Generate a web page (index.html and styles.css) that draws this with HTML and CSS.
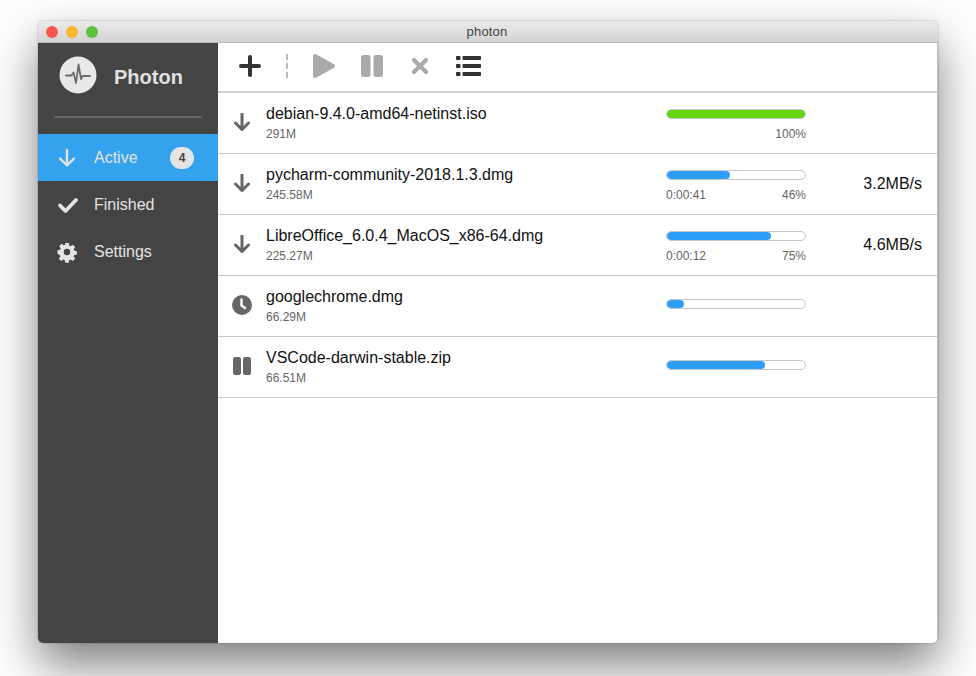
FILE: index.html
```html
<!DOCTYPE html>
<html lang="en">
<head>
    <meta charset="UTF-8">
    <meta name="viewport" content="width=device-width, initial-scale=1.0">
    <title>photon</title>
    <link rel="stylesheet" href="styles.css">
</head>
<body>
    <div class="window">
        <div class="titlebar">
            <div class="lights">
                <span class="light red"></span>
                <span class="light yellow"></span>
                <span class="light green"></span>
            </div>
            <span class="title">photon</span>
        </div>
        <div class="app">
            <aside class="sidebar">
                <div class="brand">
                    <svg class="logo" viewBox="0 0 38 38">
                        <circle cx="19" cy="19" r="18.500" fill="#e8e8e8"/>
                        <path d="M7 19.500h5.500l2-3 2.500 10.500 2.500-18.500 2.500 14.500 1.500-3h7.500" fill="none" stroke="#6b6b6b" stroke-width="1.800" stroke-linejoin="round" stroke-linecap="round"/>
                    </svg>
                    <span class="brand-name">Photon</span>
                </div>
                <div class="divider"></div>
                <nav>
                    <div class="nav-item active">
                        <svg class="nav-icon" viewBox="0 0 18 18"><path d="M9 1v15M2 9.500l7 7 7-7" fill="none" stroke="currentColor" stroke-width="2.400" stroke-linecap="round" stroke-linejoin="round"/></svg>
                        <span class="nav-label">Active</span>
                        <span class="badge">4</span>
                    </div>
                    <div class="nav-item">
                        <svg class="nav-icon wide" viewBox="0 0 20 18"><path d="M2 9.500l5.500 5.500L18 4" fill="none" stroke="currentColor" stroke-width="3.800" stroke-linecap="round" stroke-linejoin="round"/></svg>
                        <span class="nav-label">Finished</span>
                    </div>
                    <div class="nav-item">
                        <svg class="nav-icon" viewBox="0 0 18 18"><path fill-rule="evenodd" fill="currentColor" d="M7.300 0h3.400l.5 2.600 1.400.6 2.200-1.500 2.400 2.400-1.500 2.200.6 1.400 2.600.5v3.400l-2.600.5-.6 1.400 1.500 2.200-2.400 2.400-2.200-1.500-1.400.6-.5 2.600H7.300l-.5-2.600-1.400-.6-2.200 1.500-2.400-2.400 1.500-2.200-.6-1.400L-.5 10.700V7.300l2.600-.5.6-1.400-1.500-2.200 2.400-2.400 2.200 1.500 1.400-.6zM9 5.800a3.200 3.200 0 1 0 0 6.400 3.200 3.200 0 0 0 0-6.400z"/></svg>
                        <span class="nav-label">Settings</span>
                    </div>
                </nav>
            </aside>
            <main class="content">
                <div class="toolbar">
                    <svg class="tool plus" viewBox="0 0 22 22"><path d="M11 2v18M2 11h18" stroke="#333" stroke-width="4" stroke-linecap="round"/></svg>
                    <span class="tool-sep"></span>
                    <svg class="tool play" viewBox="0 0 22 24"><path d="M0 2v20a2 2 0 0 0 3 1.700l18-10a2 2 0 0 0 0-3.400L3 .3A2 2 0 0 0 0 2z" fill="#aaa"/></svg>
                    <svg class="tool pause" viewBox="0 0 22 22"><rect width="9.500" height="22" rx="2.500" fill="#aaa"/><rect x="12.500" width="9.500" height="22" rx="2.500" fill="#aaa"/></svg>
                    <svg class="tool cross" viewBox="0 0 18 18"><path d="M3 3l12 12M15 3L3 15" stroke="#aaa" stroke-width="4.200" stroke-linecap="round"/></svg>
                    <svg class="tool list" viewBox="0 0 25 20"><g fill="#333"><rect y="0" width="4.500" height="4" rx=".8"/><rect y="8" width="4.500" height="4" rx=".8"/><rect y="16" width="4.500" height="4" rx=".8"/><rect x="6.500" y="0" width="18.500" height="4" rx=".8"/><rect x="6.500" y="8" width="18.500" height="4" rx=".8"/><rect x="6.500" y="16" width="18.500" height="4" rx=".8"/></g></svg>
                </div>
                <div class="tasks">
                    <div class="task">
                        <svg class="task-icon" viewBox="0 0 18 18"><path d="M9 1v15M2.500 10l6.500 6.500 6.500-6.500" fill="none" stroke="#666" stroke-width="3" stroke-linecap="round" stroke-linejoin="round"/></svg>
                        <div class="task-info">
                            <div class="task-name">debian-9.4.0-amd64-netinst.iso</div>
                            <div class="task-size">291M</div>
                        </div>
                        <div class="task-progress">
                            <div class="bar"><div class="bar-fill done" style="width: 100%"></div></div>
                            <div class="bar-meta"><span></span><span>100%</span></div>
                        </div>
                        <div class="task-speed"></div>
                    </div>
                    <div class="task">
                        <svg class="task-icon" viewBox="0 0 18 18"><path d="M9 1v15M2.500 10l6.500 6.500 6.500-6.500" fill="none" stroke="#666" stroke-width="3" stroke-linecap="round" stroke-linejoin="round"/></svg>
                        <div class="task-info">
                            <div class="task-name">pycharm-community-2018.1.3.dmg</div>
                            <div class="task-size">245.58M</div>
                        </div>
                        <div class="task-progress">
                            <div class="bar"><div class="bar-fill" style="width: 46%"></div></div>
                            <div class="bar-meta"><span>0:00:41</span><span>46%</span></div>
                        </div>
                        <div class="task-speed">3.2MB/s</div>
                    </div>
                    <div class="task">
                        <svg class="task-icon" viewBox="0 0 18 18"><path d="M9 1v15M2.500 10l6.500 6.500 6.500-6.500" fill="none" stroke="#666" stroke-width="3" stroke-linecap="round" stroke-linejoin="round"/></svg>
                        <div class="task-info">
                            <div class="task-name">LibreOffice_6.0.4_MacOS_x86-64.dmg</div>
                            <div class="task-size">225.27M</div>
                        </div>
                        <div class="task-progress">
                            <div class="bar"><div class="bar-fill" style="width: 75%"></div></div>
                            <div class="bar-meta"><span>0:00:12</span><span>75%</span></div>
                        </div>
                        <div class="task-speed">4.6MB/s</div>
                    </div>
                    <div class="task">
                        <svg class="task-icon clock" viewBox="0 0 20 20"><circle cx="10" cy="10" r="10" fill="#666"/><path d="M9.500 4.500v6l3.500 2.500" fill="none" stroke="#fff" stroke-width="2.400" stroke-linecap="round" stroke-linejoin="round"/></svg>
                        <div class="task-info">
                            <div class="task-name">googlechrome.dmg</div>
                            <div class="task-size">66.29M</div>
                        </div>
                        <div class="task-progress solo">
                            <div class="bar"><div class="bar-fill" style="width: 12%"></div></div>
                        </div>
                        <div class="task-speed"></div>
                    </div>
                    <div class="task">
                        <svg class="task-icon" viewBox="0 0 18 18"><rect width="8" height="18" rx="2.200" fill="#666"/><rect x="10" width="8" height="18" rx="2.200" fill="#666"/></svg>
                        <div class="task-info">
                            <div class="task-name">VSCode-darwin-stable.zip</div>
                            <div class="task-size">66.51M</div>
                        </div>
                        <div class="task-progress solo">
                            <div class="bar"><div class="bar-fill" style="width: 71%"></div></div>
                        </div>
                        <div class="task-speed"></div>
                    </div>
                </div>
            </main>
        </div>
    </div>
</body>
</html>
```

FILE: styles.css
```css
html, body {
    margin: 0;
    height: 100%;
}

body {
    font-family: "Liberation Sans", Arial, sans-serif;
    background: #fff;
    padding: 21px 38px 33px;
    box-sizing: border-box;
    overflow: hidden;
}

.window {
    height: 622px;
    display: flex;
    flex-direction: column;
    border-radius: 5px;
    background: #fff;
    box-shadow: 0 22px 48px rgba(0, 0, 0, 0.5), 0 0 2px rgba(0, 0, 0, 0.35);
}

.titlebar {
    height: 22px;
    flex: none;
    display: flex;
    align-items: center;
    justify-content: center;
    position: relative;
    border-radius: 5px 5px 0 0;
    background: linear-gradient(#ebebeb, #d3d3d3);
    border-bottom: 1px solid #b8b8b8;
    box-sizing: border-box;
}

.lights {
    position: absolute;
    left: 8px;
    top: 5px;
    display: flex;
    gap: 8px;
}

.light {
    width: 12px;
    height: 12px;
    border-radius: 50%;
}

.red { background: #f4574f; }
.yellow { background: #fbb830; }
.green { background: #5cc23a; }

.title {
    font-size: 13px;
    letter-spacing: 0.2px;
    margin-right: 2px;
    color: #444;
}

.app {
    flex: 1;
    display: flex;
    min-height: 0;
}

.sidebar {
    width: 180px;
    flex: none;
    background: #444;
    color: #e4e4e4;
    border-radius: 0 0 0 5px;
}

.brand {
    height: 64px;
    padding: 13px 0 0 21px;
    box-sizing: border-box;
    display: flex;
    align-items: flex-start;
}

.logo {
    width: 38px;
    height: 38px;
    flex: none;
}

.brand-name {
    margin: 2px 0 0 17px;
    font-size: 20px;
    font-weight: bold;
    line-height: 38px;
    color: #e0e0e0;
}

.divider {
    height: 2px;
    margin: 9px 16px 0;
    background: #666;
}

nav {
    margin-top: 16px;
}

.nav-item {
    height: 47px;
    display: flex;
    align-items: center;
    padding: 0 24px 0 20px;
    font-size: 16px;
}

.nav-item.active {
    background: #35a2ee;
}

.nav-icon {
    width: 18px;
    height: 18px;
    flex: none;
    overflow: visible;
}

.nav-icon.wide {
    width: 20px;
    margin-right: -2px;
}

.nav-label {
    margin-left: 18px;
    flex: 1;
}

.badge {
    width: 24px;
    height: 22px;
    border-radius: 11px;
    background: #e4e4e4;
    color: #444;
    font-size: 12px;
    font-weight: bold;
    line-height: 22px;
    text-align: center;
}

.content {
    flex: 1;
    min-width: 0;
    display: flex;
    flex-direction: column;
    border-right: 1px solid #bbb;
    border-radius: 0 0 5px 0;
}

.toolbar {
    height: 50px;
    flex: none;
    box-sizing: border-box;
    display: flex;
    align-items: center;
    padding: 0 0 3px 21px;
    border-bottom: 2px solid #d2d2d2;
}

.tool {
    flex: none;
    display: block;
}

.plus { width: 22px; height: 22px; }

.tool-sep {
    height: 24px;
    margin: 0 25px 0 25px;
    border-left: 2px dashed #bbb;
}

.play { width: 22px; height: 24px; }
.pause { width: 22px; height: 22px; margin-left: 26px; }
.cross { width: 18px; height: 18px; margin-left: 28px; }
.list { width: 25px; height: 20px; margin-left: 27px; }

.task {
    height: 61px;
    box-sizing: border-box;
    display: flex;
    align-items: flex-start;
    padding: 12px 15px 0 15px;
    border-bottom: 1px solid #c8c8c8;
}

.task-icon {
    width: 18px;
    height: 18px;
    margin-top: 8px;
    flex: none;
}

.task-icon.clock {
    width: 20px;
    height: 20px;
    margin: 7px -1px 0 -1px;
}

.task-info {
    width: 400px;
    margin-left: 15px;
    flex: none;
}

.task-name {
    font-size: 16px;
    line-height: 18px;
    color: #111;
}

.task-size {
    margin-top: 4px;
    font-size: 12px;
    line-height: 14px;
    color: #666;
}

.task-progress {
    width: 140px;
    flex: none;
    padding-top: 4px;
}

.task-progress.solo {
    padding-top: 11px;
}

.bar {
    height: 10px;
    box-sizing: border-box;
    border: 1px solid #c8c8c8;
    border-radius: 5px;
    background: #fff;
    overflow: hidden;
}

.bar-fill {
    height: 100%;
    background: #2d9ffb;
    border-radius: 4px;
}

.bar-fill.done {
    background: #67d50f;
}

.bar-meta {
    display: flex;
    justify-content: space-between;
    margin-top: 8px;
    font-size: 12px;
    line-height: 14px;
    color: #666;
}

.task-speed {
    flex: 1;
    text-align: right;
    font-size: 16px;
    line-height: 18px;
    margin-top: 9px;
    color: #111;
}
```
